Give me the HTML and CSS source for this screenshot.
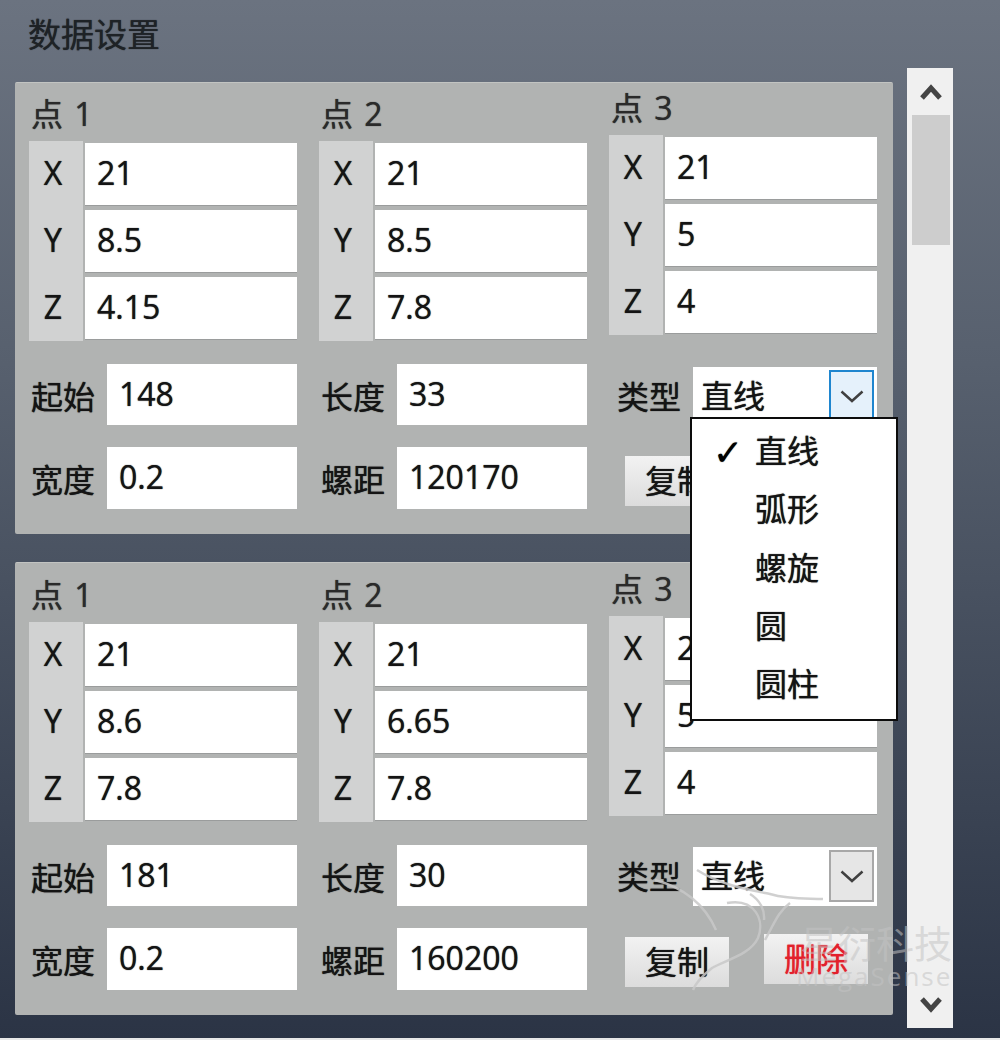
FILE: index.html
```html
<!DOCTYPE html>
<html lang="zh-CN">
<head>
    <meta charset="UTF-8">
    <title>数据设置</title>
    <link rel="stylesheet" href="styles.css">
</head>
<body>
<div class="page">
    <div class="main">
        <h1 class="title">数据设置</h1>

        <section class="panel">
            <div class="points">
                <div class="point">
                    <div class="point-name">点 1</div>
                    <div class="coords">
                        <div class="axes"><span>X</span><span>Y</span><span>Z</span></div>
                        <div class="values"><div class="field">21</div><div class="field">8.5</div><div class="field">4.15</div></div>
                    </div>
                </div>
                <div class="point">
                    <div class="point-name">点 2</div>
                    <div class="coords">
                        <div class="axes"><span>X</span><span>Y</span><span>Z</span></div>
                        <div class="values"><div class="field">21</div><div class="field">8.5</div><div class="field">7.8</div></div>
                    </div>
                </div>
                <div class="point third">
                    <div class="point-name">点 3</div>
                    <div class="coords">
                        <div class="axes"><span>X</span><span>Y</span><span>Z</span></div>
                        <div class="values"><div class="field">21</div><div class="field">5</div><div class="field">4</div></div>
                    </div>
                </div>
            </div>
            <div class="props">
                <div class="prop"><label>起始</label><div class="field">148</div></div>
                <div class="prop"><label>长度</label><div class="field">33</div></div>
                <div class="prop type">
                    <label>类型</label>
                    <div class="select">
                        <span>直线</span>
                        <span class="select-btn active">
                            <svg width="24" height="13" viewBox="0 0 24 13"><path d="M1.5 1.5l10.5 9.500 10.5-9.500" fill="none" stroke="#404040" stroke-width="2.500"/></svg>
                        </span>
                    </div>
                </div>
                <div class="prop"><label>宽度</label><div class="field">0.2</div></div>
                <div class="prop"><label>螺距</label><div class="field">120170</div></div>
                <div class="actions">
                    <button class="btn">复制</button>
                    <button class="btn del">删除</button>
                </div>
            </div>
        </section>

        <section class="panel">
            <div class="points">
                <div class="point">
                    <div class="point-name">点 1</div>
                    <div class="coords">
                        <div class="axes"><span>X</span><span>Y</span><span>Z</span></div>
                        <div class="values"><div class="field">21</div><div class="field">8.6</div><div class="field">7.8</div></div>
                    </div>
                </div>
                <div class="point">
                    <div class="point-name">点 2</div>
                    <div class="coords">
                        <div class="axes"><span>X</span><span>Y</span><span>Z</span></div>
                        <div class="values"><div class="field">21</div><div class="field">6.65</div><div class="field">7.8</div></div>
                    </div>
                </div>
                <div class="point third">
                    <div class="point-name">点 3</div>
                    <div class="coords">
                        <div class="axes"><span>X</span><span>Y</span><span>Z</span></div>
                        <div class="values"><div class="field">21</div><div class="field">5</div><div class="field">4</div></div>
                    </div>
                </div>
            </div>
            <div class="props">
                <div class="prop"><label>起始</label><div class="field">181</div></div>
                <div class="prop"><label>长度</label><div class="field">30</div></div>
                <div class="prop type">
                    <label>类型</label>
                    <div class="select">
                        <span>直线</span>
                        <span class="select-btn">
                            <svg width="24" height="13" viewBox="0 0 24 13"><path d="M1.5 1.5l10.5 9.500 10.5-9.500" fill="none" stroke="#404040" stroke-width="2.500"/></svg>
                        </span>
                    </div>
                </div>
                <div class="prop"><label>宽度</label><div class="field">0.2</div></div>
                <div class="prop"><label>螺距</label><div class="field">160200</div></div>
                <div class="actions">
                    <button class="btn">复制</button>
                    <button class="btn del">删除</button>
                </div>
            </div>
        </section>
    </div>

    <div class="scrollbar">
        <svg class="arrow" width="24" height="18" viewBox="0 0 24 18"><path d="M3 15l9-10 9 10" fill="none" stroke="#444" stroke-width="5"/></svg>
        <div class="thumb"></div>
        <svg class="arrow" width="24" height="18" viewBox="0 0 24 18"><path d="M3 3l9 10 9-10" fill="none" stroke="#444" stroke-width="5"/></svg>
    </div>
</div>

<!-- open dropdown of the first panel -->
<ul class="menu">
    <li class="checked">直线</li>
    <li>弧形</li>
    <li>螺旋</li>
    <li>圆</li>
    <li>圆柱</li>
</ul>

<!-- watermark -->
<svg class="mark-bird" width="200" height="140" viewBox="0 0 200 140">
    <path d="M47 10C70 25 100 30 120 34C140 40 160 38 173 39M5 20C35 28 55 45 66 70M77 43C105 38 115 60 108 78C100 95 75 100 62 108C52 116 46 122 43 130M140 43C128 52 125 62 115 80M100 34C110 40 115 50 114 60" fill="none" stroke="#c8c8c8" stroke-opacity=".85" stroke-width="2.500"/>
</svg>
<div class="mark-cn">星衍科技</div>
<div class="mark-en">MegaSense</div>
</body>
</html>
```

FILE: styles.css
```css
* {
    box-sizing: border-box;
}
html {
    background: #e8e8e8;
}
body {
    margin: 0;
    height: 1038px;
    overflow: hidden;
    position: relative;
    font-family: "Open Sans", "Noto Sans CJK SC", sans-serif;
    font-size: 32px;
    color: #141414;
    text-shadow: 0 0 1px;
    background: linear-gradient(#6b7380, #57606e 35%, #2b3445 100%);
}
.page {
    display: flex;
    height: 1036px;
    padding-left: 15px;
}
.main {
    width: 878px;
}
.title {
    margin: 0;
    height: 82px;
    padding: 11px 0 0 13px;
    font-size: 33px;
    font-weight: normal;
    line-height: 48px;
    color: #1e2226;
}

.panel {
    height: 452px;
    margin-bottom: 28px;
    padding: 0 16px 0 14px;
    background: #b1b3b2;
    border-top: 1px solid #c2c4c2;
    border-radius: 2px;
}
.panel + .panel {
    height: 453px;
    padding-top: 1px;
}
.panel + .panel .prop.type {
    padding-top: 2px;
}
.points {
    display: flex;
    gap: 22px;
}
.point {
    width: 268px;
}
.point.third {
    margin-top: -6px;
}
.point-name {
    height: 58px;
    padding: 8px 0 0 2px;
    line-height: 46px;
    word-spacing: 3px;
    color: #2a2a2a;
}
.coords {
    display: flex;
    height: 200px;
}
.axes {
    width: 54px;
    display: flex;
    flex-direction: column;
    background: #d1d2d2;
    padding: 2px 6px 2px 0;
    gap: 5px;
}
.axes span {
    height: 62px;
    line-height: 60px;
    text-align: center;
}
.values {
    flex: 1;
    margin-left: 2px;
    padding: 2px 0;
    display: flex;
    flex-direction: column;
    gap: 5px;
}
.field {
    height: 62px;
    line-height: 60px;
    padding-left: 12px;
    background: #fff;
}
.values .field {
    box-shadow: 0 1px 0 #9a9c9c;
}

.props {
    display: grid;
    grid-template-columns: 268px 268px 268px;
    grid-template-rows: 61px 62px;
    column-gap: 22px;
    row-gap: 22px;
    margin-top: 23px;
}
.prop {
    display: flex;
    align-items: center;
    gap: 11px;
}
.prop label {
    width: 67px;
    padding-left: 2px;
    flex: none;
}
.prop .field {
    flex: 1;
    height: 100%;
}
.prop.type {
    padding: 3px 0 0 8px;
    gap: 11px;
    align-items: flex-start;
}
.prop.type label {
    padding-left: 0;
    width: 65px;
    line-height: 60px;
}
.select {
    flex: 1;
    height: 59px;
    padding: 3px 3px 0 8px;
    display: flex;
    justify-content: space-between;
    background: #fff;
    line-height: 52px;
}
.select-btn {
    width: 45px;
    height: 52px;
    display: flex;
    align-items: center;
    justify-content: center;
    background: #e6e6e6;
    border: 2px solid #a8a8a8;
}
.select-btn.active {
    background: #e5f1fb;
    border-color: #1f86cf;
}
.actions {
    display: flex;
    gap: 35px;
    padding: 9px 0 0 16px;
    align-items: flex-start;
}
.btn {
    width: 104px;
    height: 50px;
    padding: 0;
    border: 0;
    background: linear-gradient(#f2f2f2, #dcdcdc);
    font: inherit;
    line-height: 48px;
    color: #141414;
    text-shadow: inherit;
}
.btn.del {
    color: #e3202c;
    margin-top: -3px;
}

.scrollbar {
    width: 46px;
    height: 960px;
    margin: 68px 0 0 14px;
    padding: 15px 3px 0 5px;
    background: #f0f0f0;
    display: flex;
    flex-direction: column;
    align-items: center;
}
.arrow {
    flex: none;
}
.thumb {
    width: 100%;
    height: 130px;
    margin: 14px 0 auto;
    background: #cdcdcd;
}
.scrollbar .arrow:last-child {
    margin-bottom: 14px;
}

.menu {
    position: absolute;
    left: 690px;
    top: 417px;
    width: 208px;
    height: 304px;
    margin: 0;
    padding: 4px 0 0 63px;
    list-style: none;
    background: #fff;
    border: 2px solid #0c0c0c;
}
.menu li {
    height: 58.3px;
    line-height: 56px;
    position: relative;
}
.menu li.checked::before {
    content: "✓";
    position: absolute;
    left: -42px;
    top: 2px;
    font-family: "DejaVu Sans", sans-serif;
    font-weight: bold;
    font-size: 36px;
    color: #000;
}

.mark-bird {
    position: absolute;
    left: 650px;
    top: 860px;
}
.mark-cn {
    position: absolute;
    left: 800px;
    top: 915px;
    font-size: 38px;
    line-height: 56px;
    color: rgba(195, 195, 195, .55);
    text-shadow: none;
}
.mark-en {
    position: absolute;
    left: 796px;
    top: 959px;
    font-size: 26px;
    line-height: 34px;
    letter-spacing: 2px;
    color: rgba(195, 195, 195, .55);
    text-shadow: none;
}
```
